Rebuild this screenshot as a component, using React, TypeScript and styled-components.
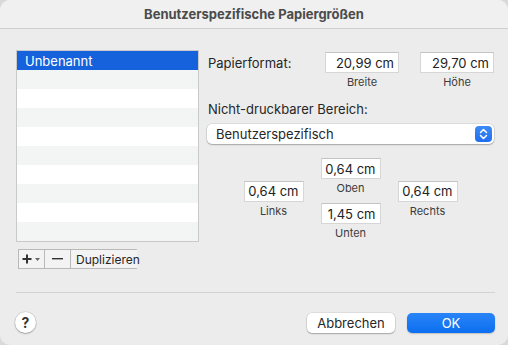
import React from "react";
import styled, { createGlobalStyle } from "styled-components";

const Global = createGlobalStyle`
  html, body { margin: 0; padding: 0; background: #d9d9d9; }
  body { font-family: Inter, "Liberation Sans", sans-serif; -webkit-font-smoothing: antialiased; }
  * { box-sizing: border-box; }
`;

const Window = styled.div`
  width: 508px;
  height: 345px;
  background: #ececec;
  border-radius: 10px;
  overflow: hidden;
  display: flex;
  flex-direction: column;
  color: #262626;
  font-size: 13px;
`;

const TitleBar = styled.div`
  height: 29px;
  flex: none;
  background: #f0f0f0;
  border-bottom: 1px solid #cfcfcf;
  display: flex;
  align-items: center;
  justify-content: center;
  padding-bottom: 1px;
  font-weight: 700;
  font-size: 13px;
  color: #4b4b4b;
`;

const Content = styled.div`
  display: flex;
  padding: 21px 14px 0 16px;
  gap: 7px;
  height: 263px;
  flex: none;
`;

const LeftCol = styled.div`
  display: flex;
  flex-direction: column;
  gap: 7px;
  width: 183px;
`;

const List = styled.div`
  height: 192px;
  border: 1px solid #c9c9c9;
  background: #fff;
  display: flex;
  flex-direction: column;
`;

const Row = styled.div<{ $sel?: boolean; $alt?: boolean }>`
  height: 19px;
  flex: none;
  padding-left: 8px;
  display: flex;
  align-items: center;
  color: ${(p) => (p.$sel ? "#fff" : "#262626")};
  background: ${(p) => (p.$sel ? "#1562dc" : p.$alt ? "#f3f4f4" : "#ffffff")};
`;

const SegGroup = styled.div`
  display: flex;
  height: 20px;
  margin-left: 2px;
  border: 1px solid #b9b9b9;
  border-right: none;
  width: 119px;
  background: #f3f3f3;
`;

const Seg = styled.div<{ $w: number }>`
  width: ${(p) => p.$w}px;
  display: flex;
  align-items: center;
  justify-content: center;
  border-right: 1px solid #b9b9b9;
  font-size: 12px;
  color: #262626;
  &:last-child { border-right: none; justify-content: flex-start; padding-left: 5px; }
`;

const RightCol = styled.div`
  flex: 1;
  display: flex;
  flex-direction: column;
`;

const SizeRow = styled.div`
  display: flex;
  align-items: flex-start;
  padding-top: 2px;
`;

const Label = styled.div`
  font-size: 13px;
  color: #262626;
  padding-left: 2px;
`;

const SizeLabel = styled(Label)`
  flex: 1;
  padding-top: 3px;
`;

const FieldGroup = styled.div<{ $w: number }>`
  width: ${(p) => p.$w}px;
  display: flex;
  flex-direction: column;
  align-items: center;
`;

const Field = styled.div`
  width: 100%;
  height: 21px;
  background: #fff;
  border: 1px solid #d6d6d6;
  border-top-color: #c4c4c4;
  display: flex;
  align-items: center;
  justify-content: flex-end;
  padding-right: 4px;
  font-size: 13px;
  color: #222;
`;

const Caption = styled.div`
  font-size: 11px;
  color: #3c3c3c;
  line-height: 13px;
  margin-top: 3px;
`;

const Gap = styled.div<{ $w: number }>`
  width: ${(p) => p.$w}px;
  flex: none;
`;

const SectionLabel = styled(Label)`
  margin-top: 12px;
  line-height: 16px;
`;

const Popup = styled.div`
  margin-top: 7px;
  margin-left: 1px;
  height: 20px;
  background: #fff;
  border-radius: 5px;
  box-shadow: 0 0 0 0.5px rgba(0, 0, 0, 0.12), 0 1px 1.5px rgba(0, 0, 0, 0.25);
  display: flex;
  align-items: center;
  justify-content: space-between;
  padding: 0 2px 0 9px;
  font-size: 13px;
`;

const Stepper = styled.div`
  width: 17px;
  height: 16px;
  border-radius: 4px;
  background: linear-gradient(#3d8bf7, #1f6fee);
  display: flex;
  align-items: center;
  justify-content: center;
`;

const Margins = styled.div`
  margin-top: 14px;
  display: grid;
  grid-template-columns: 60px 60px 60px;
  column-gap: 17px;
  justify-content: center;
  align-items: center;
  padding-left: 1px;
`;

const MidCol = styled.div`
  display: flex;
  flex-direction: column;
  gap: 8px;
`;

const Footer = styled.div`
  flex: 1;
  display: flex;
  flex-direction: column;
  padding: 0 13px 0 15px;
`;

const Separator = styled.div`
  height: 1px;
  background: #d2d2d2;
  margin-left: 1px;
`;

const ButtonRow = styled.div`
  margin-top: 19px;
  display: flex;
  align-items: center;
  gap: 12px;
`;

const Help = styled.div`
  width: 21px;
  height: 21px;
  border-radius: 50%;
  background: #fff;
  box-shadow: 0 0 0 0.5px rgba(0, 0, 0, 0.15), 0 1px 1.5px rgba(0, 0, 0, 0.25);
  display: flex;
  align-items: center;
  justify-content: center;
  font-weight: 700;
  font-size: 14px;
  color: #333;
  margin-right: auto;
`;

const Button = styled.div<{ $primary?: boolean }>`
  width: 88px;
  height: 20px;
  border-radius: 5px;
  display: flex;
  align-items: center;
  justify-content: center;
  font-size: 13px;
  color: ${(p) => (p.$primary ? "#fff" : "#262626")};
  background: ${(p) => (p.$primary ? "linear-gradient(#2a84f7, #0c6ff0)" : "#fff")};
  box-shadow: ${(p) =>
    p.$primary
      ? "0 1px 1.5px rgba(0,0,0,0.2)"
      : "0 0 0 0.5px rgba(0,0,0,0.12), 0 1px 1.5px rgba(0,0,0,0.25)"};
`;

const Chevrons = () => (
  <svg width="9" height="12" viewBox="0 0 9 12" fill="none" stroke="#fff" strokeWidth="1.5" strokeLinecap="round" strokeLinejoin="round">
    <path d="M1.5 4.5 L4.5 1.5 L7.5 4.5" />
    <path d="M1.5 7.5 L4.5 10.5 L7.5 7.5" />
  </svg>
);

const Plus = () => (
  <span style={{ display: "inline-flex", alignItems: "center", gap: 3 }}>
    <svg width="10" height="10" viewBox="0 0 10 10" stroke="#333" strokeWidth="2">
      <path d="M5 0.5 V9.5 M0.5 5 H9.5" />
    </svg>
    <svg width="5" height="3" viewBox="0 0 5 3" fill="#666">
      <path d="M0 0 H5 L2.5 3 Z" />
    </svg>
  </span>
);

const Minus = () => (
  <svg width="11" height="2" viewBox="0 0 11 2">
    <rect width="11" height="1.4" fill="#333" />
  </svg>
);

const MarginField = ({ value, caption }: { value: string; caption: string }) => (
  <FieldGroup $w={60}>
    <Field>{value}</Field>
    <Caption>{caption}</Caption>
  </FieldGroup>
);

export default function App() {
  const rows = Array.from({ length: 9 }, (_, i) => i);
  return (
    <>
      <Global />
      <Window>
        <TitleBar>Benutzerspezifische Papiergrößen</TitleBar>
        <Content>
          <LeftCol>
            <List>
              <Row $sel>Unbenannt</Row>
              {rows.map((i) => (
                <Row key={i} $alt={i % 2 === 0} />
              ))}
            </List>
            <SegGroup>
              <Seg $w={26}>
                <Plus />
              </Seg>
              <Seg $w={27}>
                <Minus />
              </Seg>
              <Seg $w={66}>Duplizieren</Seg>
            </SegGroup>
          </LeftCol>
          <RightCol>
            <SizeRow>
              <SizeLabel>Papierformat:</SizeLabel>
              <FieldGroup $w={74}>
                <Field>20,99 cm</Field>
                <Caption>Breite</Caption>
              </FieldGroup>
              <Gap $w={21} />
              <FieldGroup $w={74}>
                <Field>29,70 cm</Field>
                <Caption>Höhe</Caption>
              </FieldGroup>
            </SizeRow>
            <SectionLabel>Nicht-druckbarer Bereich:</SectionLabel>
            <Popup>
              Benutzerspezifisch
              <Stepper>
                <Chevrons />
              </Stepper>
            </Popup>
            <Margins>
              <MarginField value="0,64 cm" caption="Links" />
              <MidCol>
                <MarginField value="0,64 cm" caption="Oben" />
                <MarginField value="1,45 cm" caption="Unten" />
              </MidCol>
              <MarginField value="0,64 cm" caption="Rechts" />
            </Margins>
          </RightCol>
        </Content>
        <Footer>
          <Separator />
          <ButtonRow>
            <Help>?</Help>
            <Button>Abbrechen</Button>
            <Button $primary>OK</Button>
          </ButtonRow>
        </Footer>
      </Window>
    </>
  );
}
